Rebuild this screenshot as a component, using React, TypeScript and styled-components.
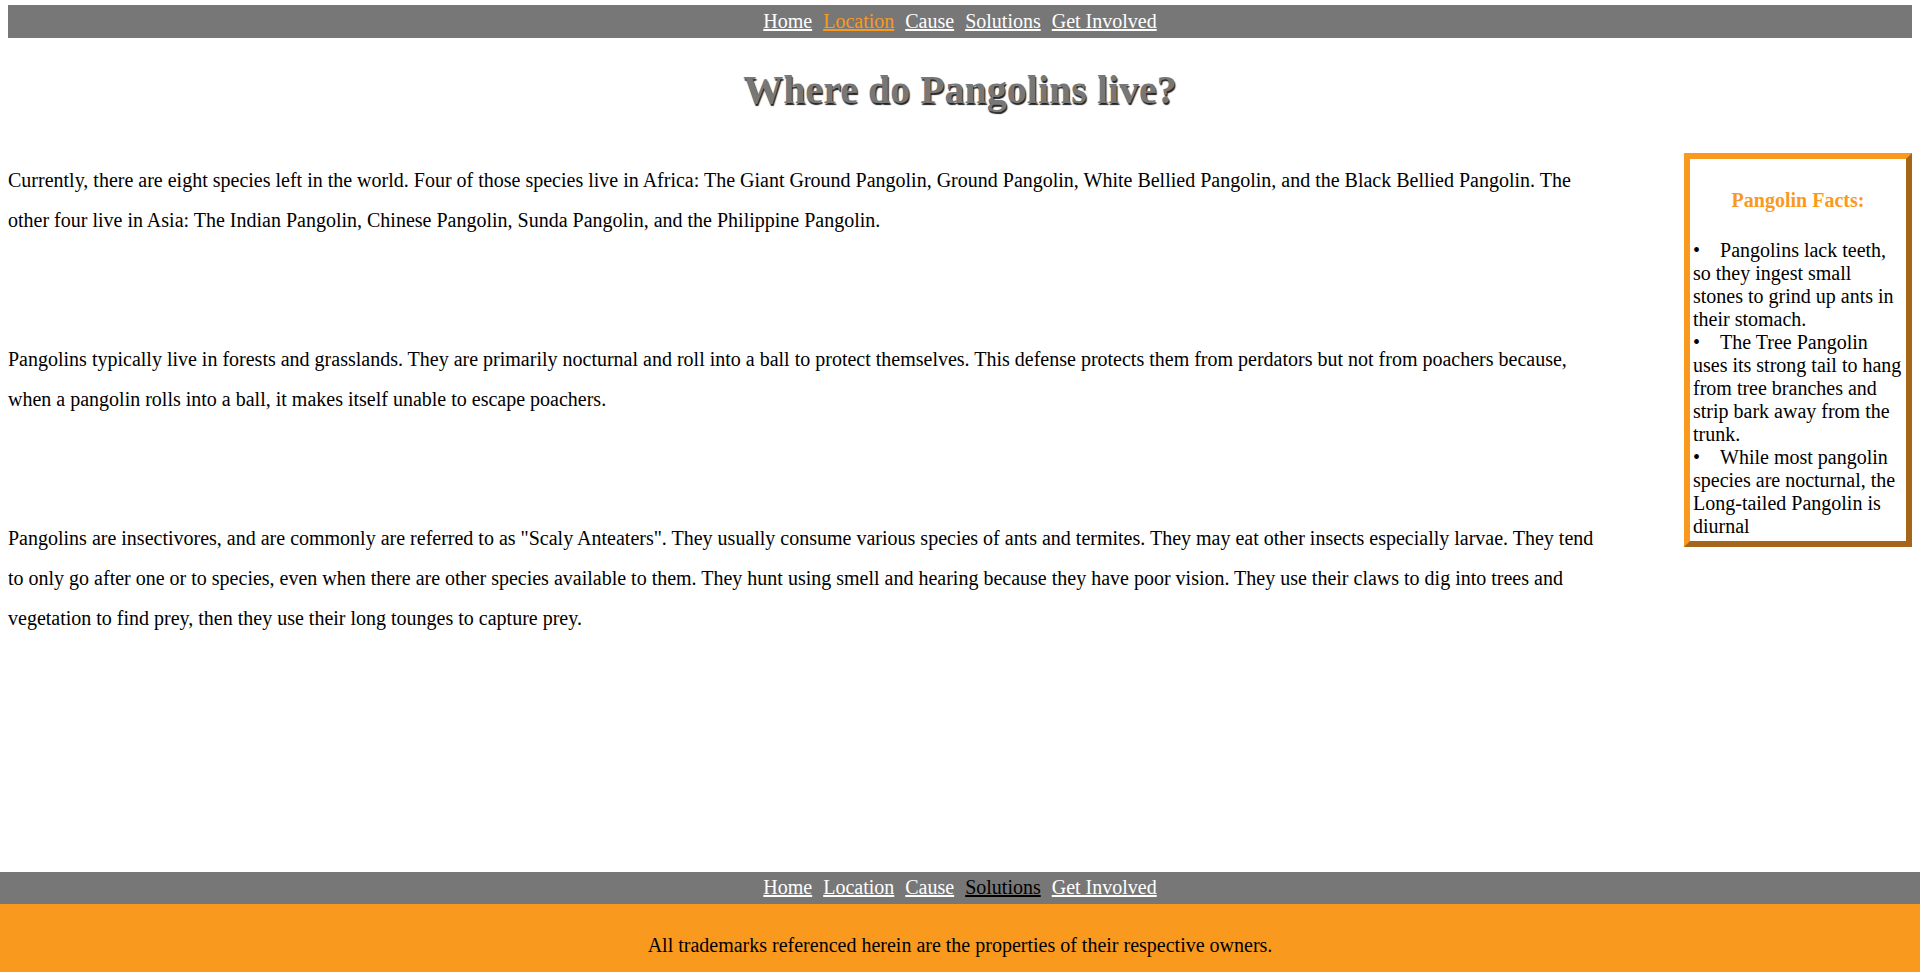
import React from "react";
import styled, { createGlobalStyle } from "styled-components";

const orange = "#f99a1e";
const orangeDark = "#a5661a";
const gray = "#777777";

const GlobalStyle = createGlobalStyle`
  html, body {
    margin: 0;
    padding: 0;
    background: #ffffff;
  }
  body {
    font-family: "Liberation Serif", "Times New Roman", serif;
    font-size: 20px;
    color: #000000;
  }
`;

type NavProps = {
  className?: string;
  active: string;
  activeColor: string;
};

const links = ["Home", "Location", "Cause", "Solutions", "Get Involved"];

const NavLink = styled.a<{ $active: boolean; $activeColor: string }>`
  color: ${(p) => (p.$active ? p.$activeColor : "#ffffff")};
  text-decoration: underline;
  line-height: 23px;
`;

const NavBase: React.FC<NavProps> = ({ className, active, activeColor }) => (
  <nav className={className}>
    {links.map((l) => (
      <NavLink key={l} href="#" $active={l === active} $activeColor={activeColor}>
        {l}
      </NavLink>
    ))}
  </nav>
);

const TopNav = styled(NavBase)`
  margin: 5px 8px 0;
  padding: 5px 0;
  background: ${gray};
  display: flex;
  justify-content: center;
  gap: 11px;
`;

const BottomNav = styled(NavBase)`
  padding: 4px 0 5px;
  background: ${gray};
  display: flex;
  justify-content: center;
  gap: 11px;
`;

const Page = styled.div`
  min-height: 100vh;
  display: flex;
  flex-direction: column;
`;

const Main = styled.main`
  flex: 1;
  padding: 0 8px;
`;

const Title = styled.h1`
  margin: 29px 0 40px;
  text-align: center;
  font-size: 40px;
  line-height: 46px;
  font-weight: bold;
  color: ${gray};
  text-shadow: 1px 2px 1px #222222;
`;

const Content = styled.div`
  display: flex;
  align-items: flex-start;
  justify-content: space-between;
`;

const Article = styled.div`
  flex: 0 0 84%;
  display: flex;
  flex-direction: column;
  gap: 99px;
  padding-top: 7px;
`;

const Para = styled.p`
  margin: 0;
  line-height: 40px;
`;

const Facts = styled.aside`
  box-sizing: border-box;
  width: 228px;
  padding: 10px 3px 3px;
  border: 6px solid;
  border-color: ${orange} ${orangeDark} ${orangeDark} ${orange};
`;

const FactsTitle = styled.h3`
  margin: 20px 0 27px;
  text-align: center;
  font-size: 20px;
  line-height: 23px;
  color: ${orange};
`;

const FactList = styled.ul`
  list-style: none;
  margin: 0;
  padding: 0;
`;

const Fact = styled.li`
  line-height: 23px;

  &::before {
    content: "•";
    margin-right: 20px;
  }
`;

const Footer = styled.footer`
  background: ${orange};
  padding: 30px 0 15px;
  text-align: center;
  line-height: 23px;
`;

const facts = [
  "Pangolins lack teeth, so they ingest small stones to grind up ants in their stomach.",
  "The Tree Pangolin uses its strong tail to hang from tree branches and strip bark away from the trunk.",
  "While most pangolin species are nocturnal, the Long-tailed Pangolin is diurnal",
];

export default function App() {
  return (
    <Page>
      <GlobalStyle />
      <TopNav active="Location" activeColor={orange} />
      <Main>
        <Title>Where do Pangolins live?</Title>
        <Content>
          <Article>
            <Para>
              Currently, there are eight species left in the world. Four of those species live in
              Africa: The Giant Ground Pangolin, Ground Pangolin, White Bellied Pangolin, and the
              Black Bellied Pangolin. The other four live in Asia: The Indian Pangolin, Chinese
              Pangolin, Sunda Pangolin, and the Philippine Pangolin.
            </Para>
            <Para>
              Pangolins typically live in forests and grasslands. They are primarily nocturnal and
              roll into a ball to protect themselves. This defense protects them from perdators but
              not from poachers because, when a pangolin rolls into a ball, it makes itself unable
              to escape poachers.
            </Para>
            <Para>
              Pangolins are insectivores, and are commonly are referred to as "Scaly Anteaters".
              They usually consume various species of ants and termites. They may eat other insects
              especially larvae. They tend to only go after one or to species, even when there are
              other species available to them. They hunt using smell and hearing because they have
              poor vision. They use their claws to dig into trees and vegetation to find prey, then
              they use their long tounges to capture prey.
            </Para>
          </Article>
          <Facts>
            <FactsTitle>Pangolin Facts:</FactsTitle>
            <FactList>
              {facts.map((f) => (
                <Fact key={f}>{f}</Fact>
              ))}
            </FactList>
          </Facts>
        </Content>
      </Main>
      <BottomNav active="Solutions" activeColor="#000000" />
      <Footer>All trademarks referenced herein are the properties of their respective owners.</Footer>
    </Page>
  );
}
